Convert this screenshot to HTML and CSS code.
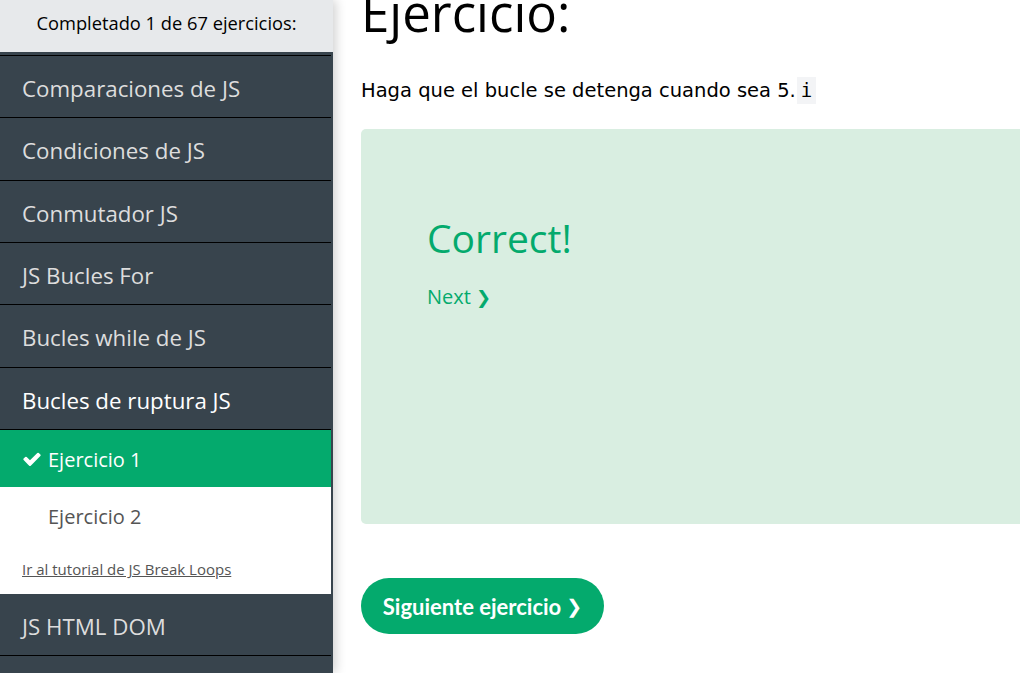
FILE: index.html
```html
<!DOCTYPE html>
<html lang="es">
<head>
<meta charset="utf-8">
<title>Ejercicio</title>
<link rel="stylesheet" href="styles.css">
</head>
<body>
<div class="page">
  <nav class="sidebar">
    <div class="progress">Completado 1 de 67 ejercicios:</div>
    <div class="chapters">
      <a class="chapter">Comparaciones de JS</a>
      <a class="chapter">Condiciones de JS</a>
      <a class="chapter">Conmutador JS</a>
      <a class="chapter">JS Bucles For</a>
      <a class="chapter">Bucles while de JS</a>
      <a class="chapter current">Bucles de ruptura JS</a>
      <div class="sub">
        <a class="exercise done"><svg class="check" viewBox="0 0 1792 1792"><path d="M1671 566q0 40-28 68l-724 724-136 136q-28 28-68 28t-68-28l-136-136-362-362q-28-28-28-68t28-68l136-136q28-28 68-28t68 28l294 295 656-657q28-28 68-28t68 28l136 136q28 28 28 68z" fill="#fff"/></svg>Ejercicio 1</a>
        <a class="exercise">Ejercicio 2</a>
        <a class="tutorial">Ir al tutorial de JS Break Loops</a>
      </div>
      <a class="chapter">JS HTML DOM</a>
      <a class="chapter last"></a>
    </div>
  </nav>
  <main class="main">
    <h1 class="title">Ejercicio:</h1>
    <p class="task">Haga que el bucle se detenga cuando sea 5.<code class="code">i</code></p>
    <div class="result">
      <div class="correct">Correct!</div>
      <a class="next">Next <span class="chev">❯</span></a>
    </div>
    <a class="btn">Siguiente ejercicio <span class="chev">❯</span></a>
  </main>
</div>
</body>
</html>
```
FILE: styles.css
```css
html, body {
  margin: 0;
  padding: 0;
  background: #fff;
  overflow: hidden;
}
.page {
  display: flex;
  width: 1020px;
  height: 673px;
  overflow: hidden;
}
.sidebar {
  flex: 0 0 333px;
  width: 333px;
  height: 673px;
  background: #38444d;
  box-shadow: 3px 0 10px rgba(0, 0, 0, 0.18);
  position: relative;
  z-index: 1;
  font-family: "Open Sans", "Noto Sans", sans-serif;
}
.progress {
  height: 52px;
  box-sizing: border-box;
  padding-top: 9px;
  background: #e7e9eb;
  color: #000;
  font-size: 18.3px;
  line-height: 28px;
  text-align: center;
}
.chapters {
  width: 331px;
  margin-top: 3px;
  border-top: 1px solid #000;
}
.chapter {
  display: flex;
  align-items: center;
  box-sizing: border-box;
  height: 62.33px;
  padding-top: 4px;
  border-bottom: 1px solid #000;
  padding-left: 22px;
  color: #dddddd;
  font-size: 22.3px;
  text-decoration: none;
}
.chapter.current {
  color: #fff;
}
.chapter.last {
  border-bottom: none;
}
.sub {
  background: #fff;
  padding-bottom: 15px;
}
.exercise {
  display: flex;
  align-items: center;
  height: 57px;
  box-sizing: border-box;
  padding-top: 2px;
  padding-left: 48px;
  color: #555;
  font-size: 20px;
}
.exercise.done {
  background: #04aa6d;
  color: #fff;
  padding-left: 22px;
}
.check {
  width: 20px;
  height: 20px;
  margin-right: 6px;
}
.tutorial {
  display: block;
  padding-left: 22px;
  padding-top: 15px;
  color: #555;
  font-size: 15px;
  line-height: 20px;
  text-decoration: underline;
}
.main {
  flex: 1 1 auto;
  padding-left: 28px;
  min-width: 0;
}
.title {
  margin: -20px 0 0 0;
  font-family: "Open Sans", "Noto Sans", sans-serif;
  font-weight: 400;
  font-size: 51px;
  line-height: 64px;
  color: #000;
}
.task {
  margin: 33px 0 0 0;
  font-family: "DejaVu Sans", Verdana, sans-serif;
  font-size: 19.5px;
  line-height: 26px;
  color: #000;
}
.code {
  font-family: "DejaVu Sans Mono", "Liberation Mono", monospace;
  font-size: 19px;
  background: #f3f4f6;
  padding: 2px 4px 3px;
  margin-left: 1px;
}
.result {
  margin-top: 25px;
  width: 720px;
  height: 395px;
  box-sizing: border-box;
  background: #d9eee1;
  border-radius: 5px;
  padding: 83px 0 0 66px;
  font-family: "Open Sans", "Noto Sans", sans-serif;
  color: #04aa6d;
}
.correct {
  font-size: 39px;
  line-height: 52px;
}
.next {
  display: block;
  margin-top: 20px;
  font-size: 20px;
  line-height: 26px;
}
.next .chev {
  font-family: "DejaVu Sans", sans-serif;
  font-size: 18px;
}
.btn {
  display: inline-flex;
  align-items: center;
  justify-content: center;
  margin-top: 54px;
  width: 243px;
  height: 56px;
  border-radius: 28px;
  background: #04aa6d;
  color: #fff;
  font-family: "Lato", "Open Sans", sans-serif;
  font-weight: 700;
  font-size: 22px;
  text-decoration: none;
}
.btn .chev {
  font-family: "DejaVu Sans", sans-serif;
  font-size: 19px;
  margin-left: 5px;
}
```
